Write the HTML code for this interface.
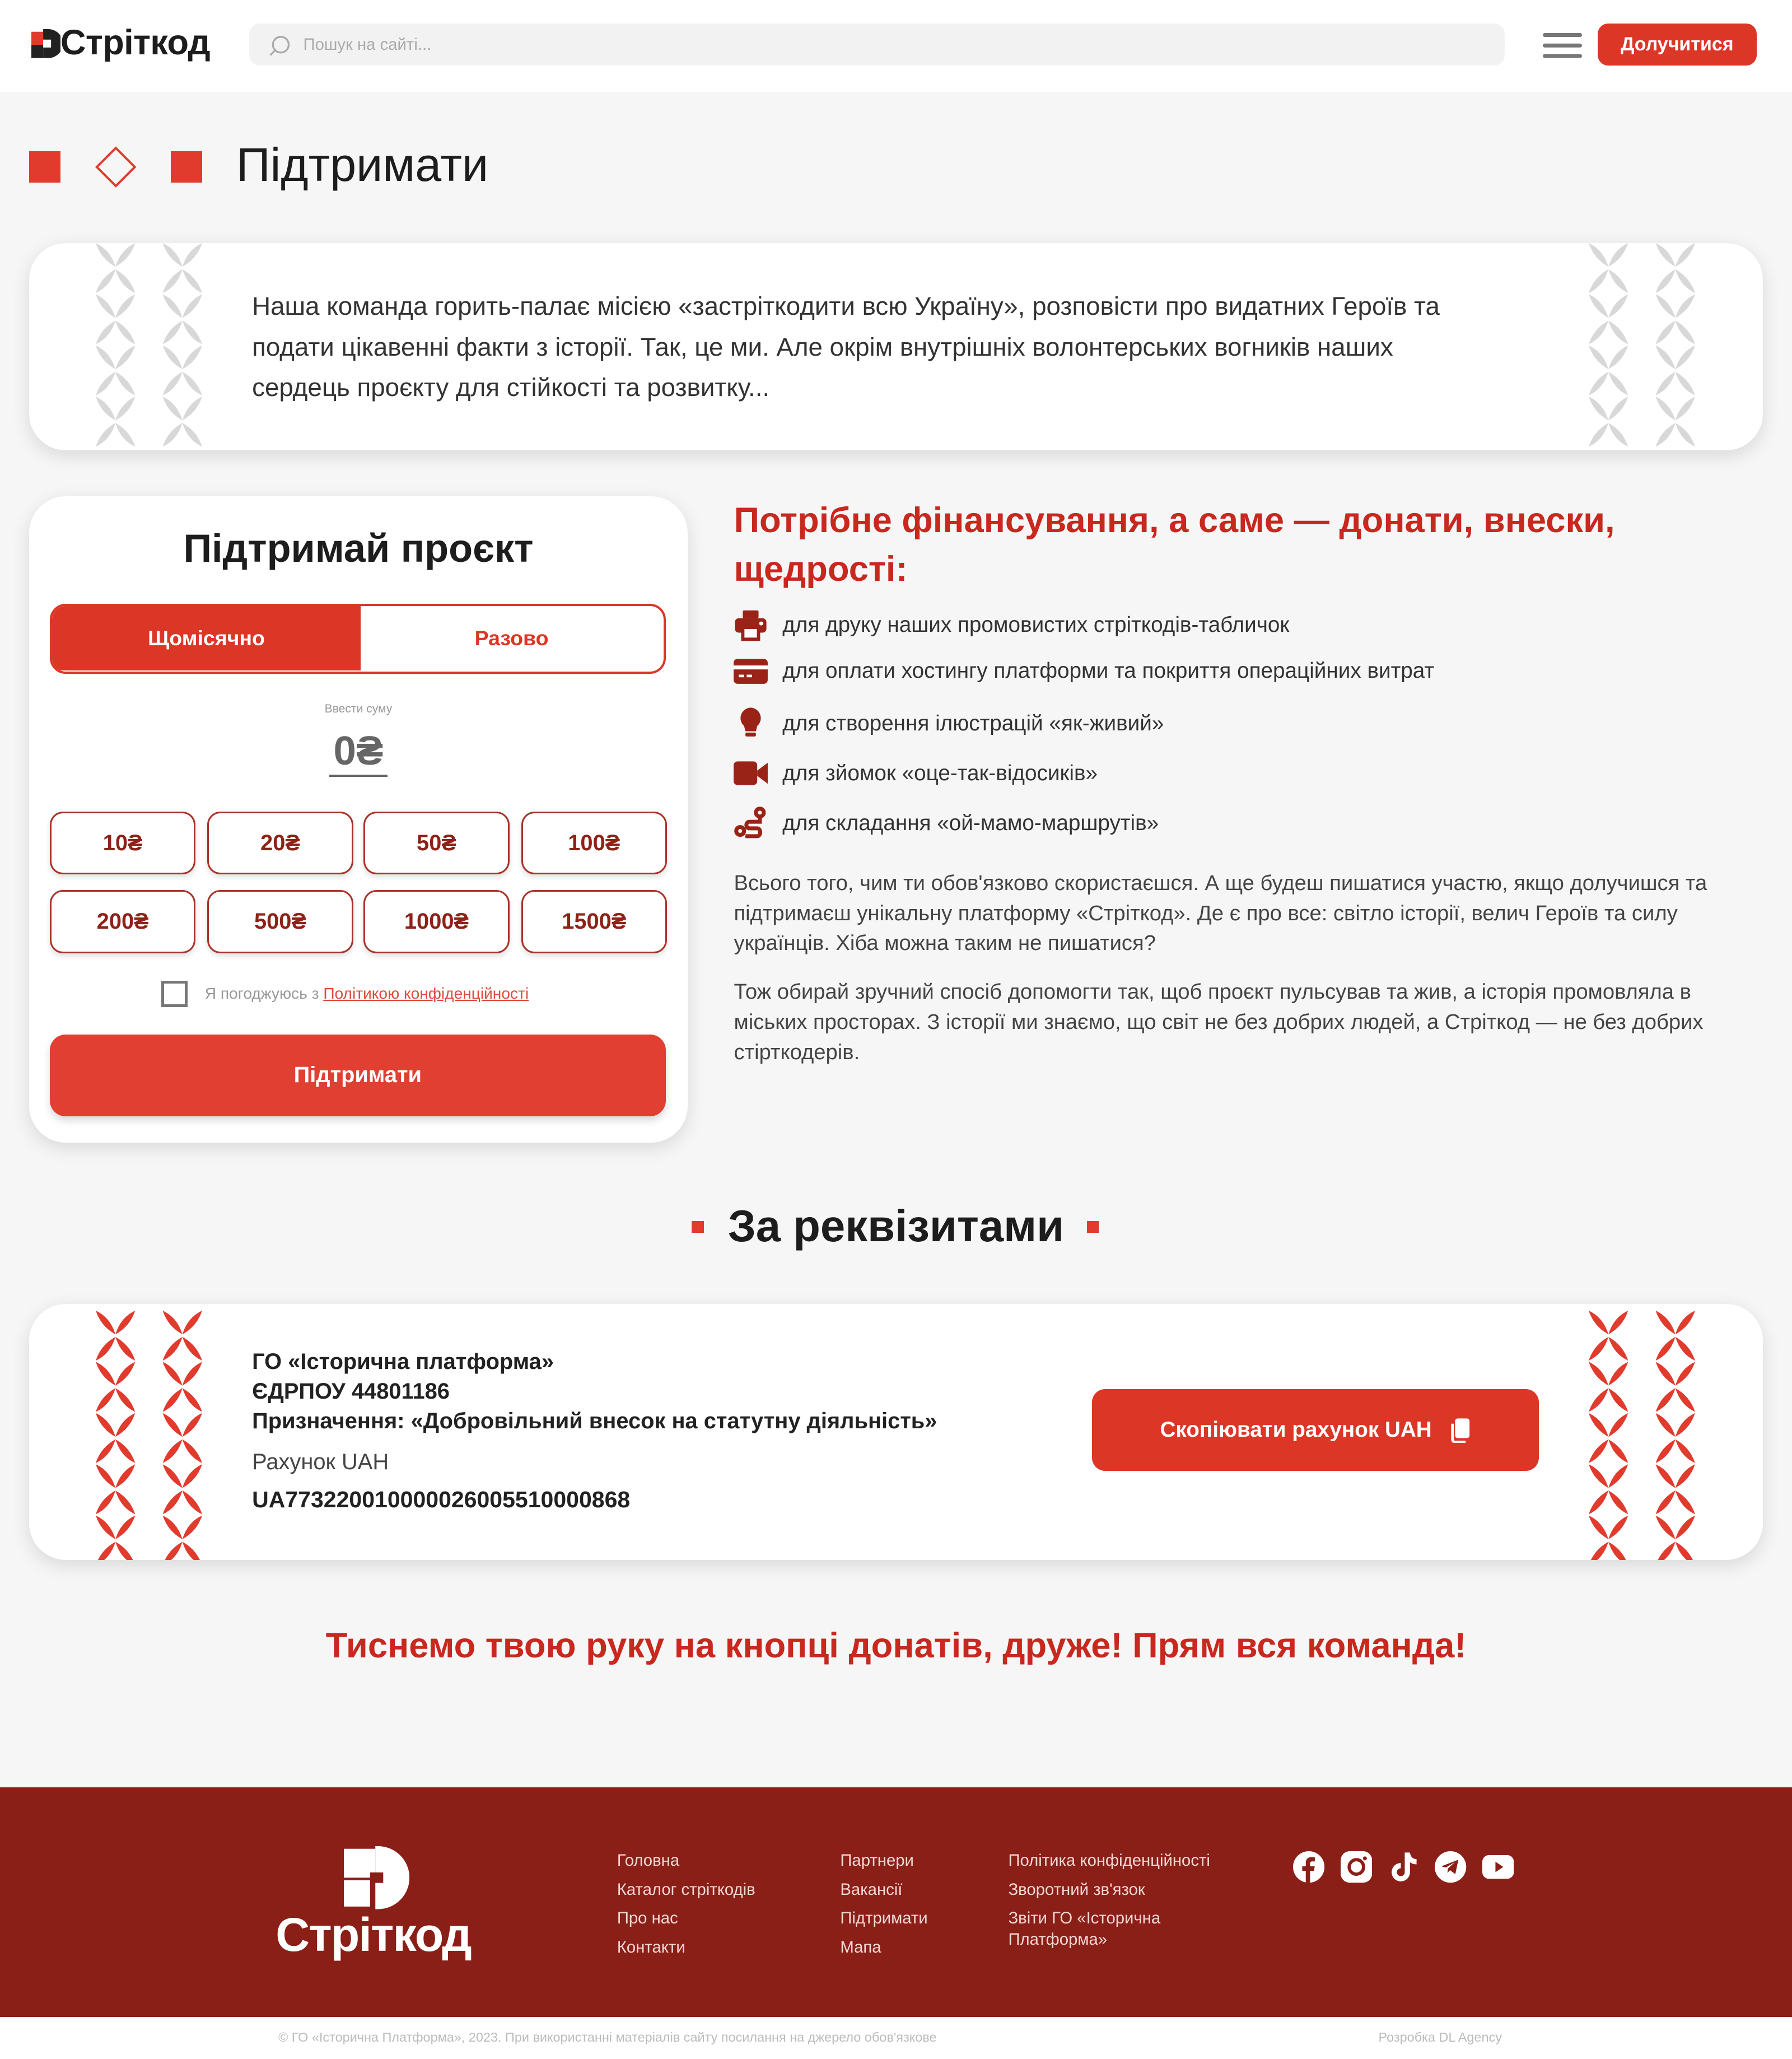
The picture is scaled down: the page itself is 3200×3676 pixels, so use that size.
<!DOCTYPE html>
<html><head><meta charset="utf-8">
<style>
*{box-sizing:border-box;margin:0;padding:0}
html,body{width:3200px;height:3676px;overflow:hidden;background:#f6f6f6}
#w{zoom:2.34432;width:1365px;height:1568px;position:relative;font-family:"Liberation Sans","DejaVu Sans",sans-serif;background:#f6f6f6;color:#222}
.a{position:absolute}
.card{position:absolute;background:#fff;border-radius:28px;box-shadow:0 4px 14px rgba(0,0,0,.12)}
.amt{position:absolute;width:111px;height:48px;border:1.5px solid #a83228;border-radius:10px;background:#fff;color:#8e2218;font-weight:bold;font-size:17px;display:flex;align-items:center;justify-content:center;box-shadow:0 2px 4px rgba(0,0,0,.12)}
.li{position:absolute;left:559px;font-size:16.5px;color:#333;display:flex;align-items:center}
.li svg{width:26px;height:26px;margin-right:11px}
.p{position:absolute;left:559px;width:780px;font-size:16.3px;line-height:23px;color:#444}
.fl{position:absolute;color:#f3d6d3;font-size:12.5px;line-height:22px}
.soc{position:absolute;top:1410px;width:24px;height:24px}
</style></head><body><div id="w">
<svg width="0" height="0" style="position:absolute"><defs>
<g id="x4"><path d="M0 0 Q11 5 15 18 Q4 12 0 0Z"/><path d="M30 0 Q19 5 15 18 Q26 12 30 0Z"/><path d="M0 38 Q11 33 15 20 Q4 26 0 38Z"/><path d="M30 38 Q19 33 15 20 Q26 26 30 38Z"/></g>
</defs></svg>

<!-- header -->
<div class="a" style="left:0;top:0;width:1365px;height:70px;background:#fff"></div>
<svg class="a" style="left:24px;top:22px" width="22" height="24" viewBox="0 0 22 24"><rect x="0" y="2" width="9" height="10" fill="#e03b2d"/><path d="M9 0h4a11 11 0 0 1 0 22h-4z" fill="#222"/><rect x="0" y="12" width="9" height="10" fill="#222"/><rect x="9" y="8" width="6" height="6" fill="#fff"/></svg>
<div class="a" style="left:46px;top:17px;font-size:27px;font-weight:bold;letter-spacing:-0.3px;color:#1d1d1d">Стріткод</div>
<div class="a" style="left:190px;top:18px;width:956px;height:32px;background:#f2f2f2;border-radius:8px"></div>
<svg class="a" style="left:204px;top:26px" width="18" height="18" viewBox="0 0 18 18"><circle cx="10" cy="8" r="6" fill="none" stroke="#aaa" stroke-width="1.4"/><path d="M6 12 2 16" stroke="#aaa" stroke-width="1.4"/></svg>
<div class="a" style="left:231px;top:27px;font-size:12.5px;color:#aaa">Пошук на сайті...</div>
<div class="a" style="left:1175px;top:25px;width:30px;height:3px;background:#777;border-radius:2px;box-shadow:0 8px 0 #777,0 16px 0 #777"></div>
<div class="a" style="left:1217px;top:18px;width:121px;height:32px;background:#dc3626;border-radius:8px;color:#fff;font-weight:bold;font-size:14.5px;display:flex;align-items:center;justify-content:center">Долучитися</div>

<!-- title -->
<div class="a" style="left:22px;top:115px;width:24px;height:24px;background:#e03b2d"></div>
<div class="a" style="left:77px;top:116px;width:22px;height:22px;border:2px solid #e03b2d;transform:rotate(45deg)"></div>
<div class="a" style="left:130px;top:115px;width:24px;height:24px;background:#e03b2d"></div>
<div class="a" style="left:180px;top:105px;font-size:36px;color:#1d1d1d">Підтримати</div>

<!-- intro card -->
<div class="card" style="left:22px;top:185px;width:1321px;height:158px;overflow:hidden">
 <svg class="a" style="left:51px;top:0" width="82" height="158"><g fill="#d8d8d8">
  <use href="#x4" y="0"/><use href="#x4" x="51" y="0"/><use href="#x4" y="39"/><use href="#x4" x="51" y="39"/><use href="#x4" y="78"/><use href="#x4" x="51" y="78"/><use href="#x4" y="117"/><use href="#x4" x="51" y="117"/></g></svg>
 <svg class="a" style="left:1188px;top:0" width="82" height="158"><g fill="#d8d8d8">
  <use href="#x4" y="0"/><use href="#x4" x="51" y="0"/><use href="#x4" y="39"/><use href="#x4" x="51" y="39"/><use href="#x4" y="78"/><use href="#x4" x="51" y="78"/><use href="#x4" y="117"/><use href="#x4" x="51" y="117"/></g></svg>
 <div class="a" style="left:170px;top:33px;width:930px;font-size:19.5px;line-height:31px;color:#333">Наша команда горить-палає місією «застріткодити всю Україну», розповісти про видатних Героїв та подати цікавенні факти з історії. Так, це ми. Але окрім внутрішніх волонтерських вогників наших сердець проєкту для стійкості та розвитку...</div>
</div>

<!-- donate card -->
<div class="card" style="left:22px;top:378px;width:502px;height:492px">
 <div class="a" style="left:0;top:22px;width:502px;text-align:center;font-size:30px;font-weight:bold;color:#1d1d1d">Підтримай проєкт</div>
 <div class="a" style="left:16px;top:82px;width:469px;height:53px;border:2px solid #dc3626;border-radius:12px;overflow:hidden">
  <div class="a" style="left:0;top:0;width:235px;height:49px;background:#dc3626;color:#fff;font-weight:bold;font-size:16px;display:flex;align-items:center;justify-content:center">Щомісячно</div>
  <div class="a" style="left:235px;top:0;width:230px;height:49px;color:#dc3626;font-weight:bold;font-size:16px;display:flex;align-items:center;justify-content:center">Разово</div>
 </div>
 <div class="a" style="left:0;top:157px;width:502px;text-align:center;font-size:9px;color:#999">Ввести суму</div>
 <div class="a" style="left:229px;top:176px;width:44px;text-align:center;font-size:31px;font-weight:bold;color:#666;border-bottom:2px solid #666;line-height:36px">0₴</div>
</div>
<div class="amt" style="left:38px;top:618px">10₴</div><div class="amt" style="left:158px;top:618px">20₴</div><div class="amt" style="left:277px;top:618px">50₴</div><div class="amt" style="left:397px;top:618px">100₴</div>
<div class="amt" style="left:38px;top:678px">200₴</div><div class="amt" style="left:158px;top:678px">500₴</div><div class="amt" style="left:277px;top:678px">1000₴</div><div class="amt" style="left:397px;top:678px">1500₴</div>
<div class="a" style="left:123px;top:747px;width:20px;height:20px;border:2.5px solid #777"></div>
<div class="a" style="left:156px;top:750px;font-size:12px;color:#999">Я погоджуюсь з <span style="color:#e04a3c;text-decoration:underline">Політикою конфіденційності</span></div>
<div class="a" style="left:38px;top:788px;width:469px;height:62px;background:#e03f31;border-radius:12px;color:#fff;font-weight:bold;font-size:17px;display:flex;align-items:center;justify-content:center;box-shadow:0 3px 6px rgba(0,0,0,.15)">Підтримати</div>

<!-- right -->
<div class="a" style="left:559px;top:378px;width:760px;font-size:27px;line-height:37px;font-weight:bold;color:#c8281e">Потрібне фінансування, а саме — донати, внески, щедрості:</div>
<div class="li" style="top:463px"><svg viewBox="0 0 26 26" fill="#9a2318"><rect x="7" y="2" width="12" height="6" rx="1"/><rect x="1" y="8" width="24" height="11" rx="3"/><rect x="7" y="15" width="12" height="9" fill="#fff" stroke="#9a2318" stroke-width="2.5"/><circle cx="21" cy="12" r="1.5" fill="#fff"/></svg>для друку наших промовистих стріткодів-табличок</div>
<div class="li" style="top:498px"><svg viewBox="0 0 26 26" fill="#9a2318"><rect x="0" y="4" width="26" height="19" rx="3"/><rect x="0" y="9" width="26" height="3" fill="#fff"/><rect x="4" y="16" width="4" height="2" fill="#fff"/><rect x="10" y="16" width="4" height="2" fill="#fff"/></svg>для оплати хостингу платформи та покриття операційних витрат</div>
<div class="li" style="top:538px"><svg viewBox="0 0 26 26" fill="#9a2318"><path d="M13 1a8 8 0 0 1 5 14l-1 4h-8l-1-4A8 8 0 0 1 13 1z"/><rect x="9" y="20" width="8" height="3" rx="1"/></svg>для створення ілюстрацій «як-живий»</div>
<div class="li" style="top:576px"><svg viewBox="0 0 26 26" fill="#9a2318"><rect x="0" y="4" width="18" height="18" rx="3"/><path d="M18 11 26 5v16l-8-6z"/></svg>для зйомок «оце-так-відосиків»</div>
<div class="li" style="top:614px"><svg viewBox="0 0 26 26" fill="none" stroke="#9a2318" stroke-width="3"><circle cx="20" cy="5" r="3"/><circle cx="5" cy="19" r="3"/><path d="M20 8v4h-8c-3 0-3 5 0 5h6c3 0 3 6 0 6H9"/></svg>для складання «ой-мамо-маршрутів»</div>
<div class="p" style="top:661px">Всього того, чим ти обов'язково скористаєшся. А ще будеш пишатися участю, якщо долучишся та підтримаєш унікальну платформу «Стріткод». Де є про все: світло історії, велич Героїв та силу українців. Хіба можна таким не пишатися?</div>
<div class="p" style="top:744px;width:770px">Тож обирай зручний спосіб допомогти так, щоб проєкт пульсував та жив, а історія промовляла в міських просторах. З історії ми знаємо, що світ не без добрих людей, а Стріткод — не без добрих стірткодерів.</div>

<!-- requisites -->
<div class="a" style="left:527px;top:930px;width:9px;height:9px;background:#e03b2d"></div>
<div class="a" style="left:0;top:914px;width:1365px;text-align:center;font-size:34px;font-weight:bold;color:#1d1d1d">За реквізитами</div>
<div class="a" style="left:828px;top:930px;width:9px;height:9px;background:#e03b2d"></div>
<div class="card" style="left:22px;top:993px;width:1321px;height:195px;overflow:hidden">
 <svg class="a" style="left:51px;top:5px" width="82" height="190"><g fill="#e03b2d">
  <use href="#x4" y="0"/><use href="#x4" x="51" y="0"/><use href="#x4" y="39"/><use href="#x4" x="51" y="39"/><use href="#x4" y="78"/><use href="#x4" x="51" y="78"/><use href="#x4" y="117"/><use href="#x4" x="51" y="117"/><use href="#x4" y="156"/><use href="#x4" x="51" y="156"/></g></svg>
 <svg class="a" style="left:1188px;top:5px" width="82" height="190"><g fill="#e03b2d">
  <use href="#x4" y="0"/><use href="#x4" x="51" y="0"/><use href="#x4" y="39"/><use href="#x4" x="51" y="39"/><use href="#x4" y="78"/><use href="#x4" x="51" y="78"/><use href="#x4" y="117"/><use href="#x4" x="51" y="117"/><use href="#x4" y="156"/><use href="#x4" x="51" y="156"/></g></svg>
 <div class="a" style="left:170px;top:33px;font-size:17px;line-height:22.5px;font-weight:bold;color:#222">ГО «Історична платформа»<br>ЄДРПОУ 44801186<br>Призначення: «Добровільний внесок на статутну діяльність»</div>
 <div class="a" style="left:170px;top:111px;font-size:17px;color:#444">Рахунок UAH</div>
 <div class="a" style="left:170px;top:139px;font-size:17.5px;font-weight:bold;color:#222">UA773220010000026005510000868</div>
 <div class="a" style="left:810px;top:65px;width:340px;height:62px;background:#dc3626;border-radius:10px;color:#fff;font-weight:bold;font-size:16.5px;display:flex;align-items:center;justify-content:center">Скопіювати рахунок UAH&nbsp;&nbsp;&nbsp;<svg width="16" height="20" viewBox="0 0 16 20"><rect x="4" y="1" width="11" height="15" rx="2" fill="#fff"/><path d="M2 5v12a2 2 0 0 0 2 2h8" stroke="#fff" stroke-width="2" fill="none"/></svg></div>
</div>

<div class="a" style="left:0;top:1238px;width:1365px;text-align:center;font-size:27px;font-weight:bold;color:#c8281e">Тиснемо твою руку на кнопці донатів, друже! Прям вся команда!</div>

<!-- footer -->
<div class="a" style="left:0;top:1361px;width:1365px;height:175px;background:#8a1f18"></div>
<svg class="a" style="left:262px;top:1406px" width="50" height="50" viewBox="0 0 50 50"><path d="M24 0h2a24 24 0 0 1 0 48h-2z" fill="#fff"/><rect x="0" y="2" width="24" height="22" fill="#fff"/><rect x="0" y="26" width="20" height="20" fill="#fff"/><rect x="20" y="20" width="10" height="8" fill="#8a1f18"/></svg>
<div class="a" style="left:210px;top:1453px;font-size:36px;font-weight:bold;color:#fff;letter-spacing:-0.8px">Стріткод</div>
<div class="fl" style="left:470px;top:1406px">Головна<br>Каталог стріткодів<br>Про нас<br>Контакти</div>
<div class="fl" style="left:640px;top:1406px">Партнери<br>Вакансії<br>Підтримати<br>Мапа</div>
<div class="fl" style="left:768px;top:1406px">Політика конфіденційності<br>Зворотний зв'язок<br>Звіти ГО «Історична<br><span style="line-height:10px;display:inline-block;position:relative;top:-6px">Платформа»</span></div>
<svg class="soc" style="left:985px" viewBox="0 0 24 24"><circle cx="12" cy="12" r="12" fill="#fff"/><path d="M13 24v-9h3l.5-3.5H13V9.5c0-1 .3-1.7 1.8-1.7h1.8V4.7c-.3 0-1.4-.2-2.6-.2-2.6 0-4.3 1.6-4.3 4.5v2.5H7V15h2.7v9z" fill="#8a1f18"/></svg>
<svg class="soc" style="left:1021px" viewBox="0 0 24 24"><rect width="24" height="24" rx="7" fill="#fff"/><circle cx="12" cy="12" r="5.5" fill="none" stroke="#8a1f18" stroke-width="2.5"/><circle cx="18.5" cy="5.5" r="1.5" fill="#8a1f18"/></svg>
<svg class="soc" style="left:1057px" viewBox="0 0 24 24"><path d="M13 1h4c.3 3 2 5 5 5v4c-2 0-3.7-.6-5-1.6V16a7 7 0 1 1-7-7v4a3 3 0 1 0 3 3z" fill="#fff"/></svg>
<svg class="soc" style="left:1093px" viewBox="0 0 24 24"><circle cx="12" cy="12" r="12" fill="#fff"/><path d="M5 11.5 18 6.5l-2.3 11-4-3-2 2 .3-3.3 5.5-5-7 4.2z" fill="#8a1f18"/></svg>
<svg class="soc" style="left:1129px" viewBox="0 0 24 24"><rect x="0" y="3" width="24" height="18" rx="5" fill="#fff"/><path d="M10 8v8l6-4z" fill="#8a1f18"/></svg>
<div class="a" style="left:0;top:1536px;width:1365px;height:32px;background:#fff"></div>
<div class="a" style="left:212px;top:1546px;font-size:10px;color:#bbb">© ГО «Історична Платформа», 2023. При використанні матеріалів сайту посилання на джерело обов'язкове</div>
<div class="a" style="left:1050px;top:1546px;font-size:10px;color:#bbb">Розробка DL Agency</div>
</div></body></html>
